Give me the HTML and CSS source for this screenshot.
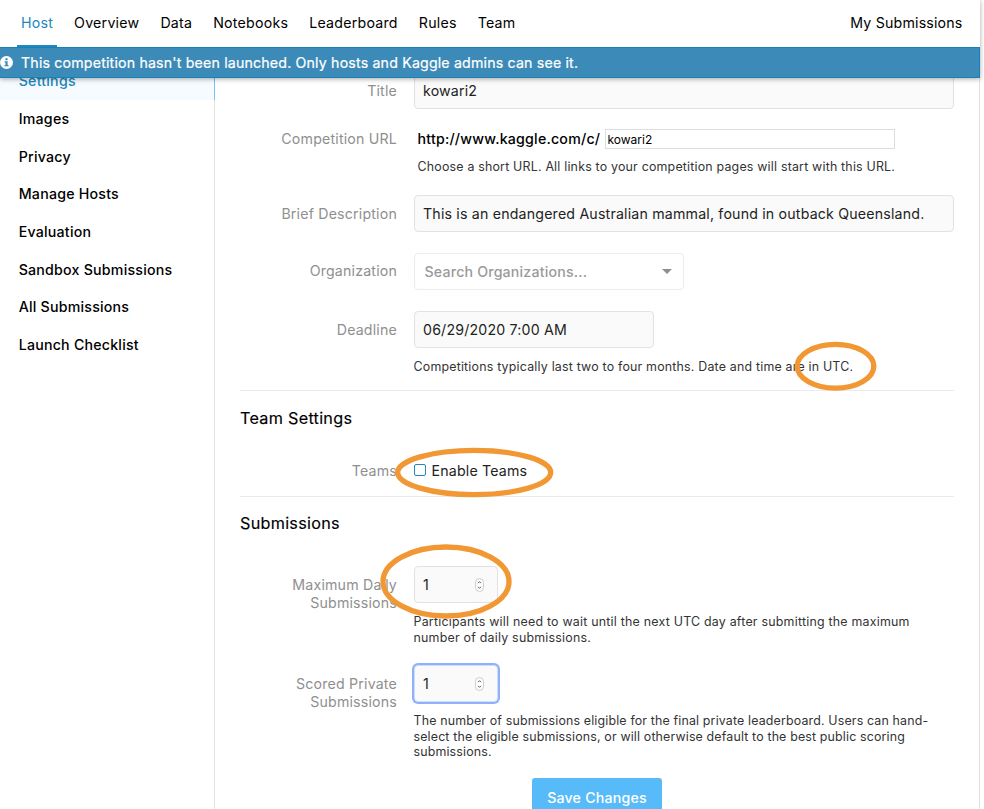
FILE: index.html
```
<!DOCTYPE html>
<html lang="en">
<head>
<meta charset="utf-8">
<title>Competition settings</title>
<link rel="stylesheet" href="styles.css">
</head>
<body>
<div class="page">
  <header class="header">
    <nav class="nav">
      <a class="nav-item active">Host</a>
      <a class="nav-item">Overview</a>
      <a class="nav-item">Data</a>
      <a class="nav-item">Notebooks</a>
      <a class="nav-item">Leaderboard</a>
      <a class="nav-item">Rules</a>
      <a class="nav-item">Team</a>
      <a class="nav-item nav-right">My Submissions</a>
    </nav>
    <div class="banner">
      <svg class="info" viewBox="0 0 13 13"><circle cx="6.5" cy="6.5" r="6.5" fill="#fff"/><path d="M5.4 2.3h2.2v1.9H5.4zM4.6 5.3h3v3.6h.9v1.3H4.5V8.900h1V6.600h-.9z" fill="#3c8ab8"/></svg>
      <span>This competition hasn't been launched. Only hosts and Kaggle admins can see it.</span>
    </div>
  </header>
  <div class="body">
    <aside class="sidebar">
      <a class="side-item current">Settings</a>
      <a class="side-item">Images</a>
      <a class="side-item">Privacy</a>
      <a class="side-item">Manage Hosts</a>
      <a class="side-item">Evaluation</a>
      <a class="side-item">Sandbox Submissions</a>
      <a class="side-item">All Submissions</a>
      <a class="side-item">Launch Checklist</a>
    </aside>
    <main class="form">
      <section class="group group-basic">
        <div class="row">
          <div class="label">Title</div>
          <div class="field"><div class="input">kowari2</div></div>
        </div>
        <div class="row row-url">
          <div class="label">Competition URL</div>
          <div class="field">
            <div class="url"><span class="url-prefix">http://www.kaggle.com/c/</span><div class="url-input">kowari2</div></div>
            <p class="help">Choose a short URL. All links to your competition pages will start with this URL.</p>
          </div>
        </div>
        <div class="row row-brief">
          <div class="label">Brief Description</div>
          <div class="field"><div class="input">This is an endangered Australian mammal, found in outback Queensland.</div></div>
        </div>
        <div class="row row-org">
          <div class="label">Organization</div>
          <div class="field"><div class="select"><span>Search Organizations...</span><i class="caret"></i></div></div>
        </div>
        <div class="row row-deadline">
          <div class="label">Deadline</div>
          <div class="field">
            <div class="input input-date">06/29/2020 7:00 AM</div>
            <p class="help">Competitions typically last two to four months. Date and time are in UTC.</p>
          </div>
        </div>
      </section>
      <section class="group group-team">
        <h2>Team Settings</h2>
        <div class="row row-teams">
          <div class="label">Teams</div>
          <div class="field check"><i class="box"></i><span>Enable Teams</span></div>
        </div>
      </section>
      <section class="group group-subs">
        <h2>Submissions</h2>
        <div class="row row-max">
          <div class="label">Maximum Daily Submissions</div>
          <div class="field">
            <div class="input input-num"><span>1</span><svg class="stepper" viewBox="0 0 9 14"><rect x=".5" y=".5" width="8" height="13" rx="4" fill="#fff" stroke="#ccc"/><path d="M3 5.200 4.500 3.700 6 5.200M3 8.800 4.500 10.300 6 8.800" fill="none" stroke="#444" stroke-width=".9"/></svg></div>
            <p class="help help-wide">Participants will need to wait until the next UTC day after submitting the maximum<br>number of daily submissions.</p>
          </div>
        </div>
        <div class="row row-scored">
          <div class="label">Scored Private Submissions</div>
          <div class="field">
            <div class="input input-num focused"><span>1</span><svg class="stepper" viewBox="0 0 9 14"><rect x=".5" y=".5" width="8" height="13" rx="4" fill="#fff" stroke="#ccc"/><path d="M3 5.200 4.500 3.700 6 5.200M3 8.800 4.500 10.300 6 8.800" fill="none" stroke="#444" stroke-width=".9"/></svg></div>
            <p class="help help-tight">The number of submissions eligible for the final private leaderboard. Users can hand-<br>select the eligible submissions, or will otherwise default to the best public scoring<br>submissions.</p>
          </div>
        </div>
        <button class="save">Save Changes</button>
      </section>
    </main>
  </div>
</div>
<svg class="marks" viewBox="0 0 984 809">
  <ellipse cx="835.5" cy="366.300" rx="38.300" ry="21.900"/>
  <ellipse cx="474.200" cy="472.500" rx="76.500" ry="22.100"/>
  <ellipse cx="446" cy="581.500" rx="63" ry="34.500"/>
</svg>
</body>
</html>
```
FILE: styles.css
```
* { box-sizing: border-box; }

html, body { height: 100%; }

body {
  margin: 0;
  background: #fff;
  color: #000;
  font: 14.2px/18px Inter, "Liberation Sans", sans-serif;
  letter-spacing: .21px;
  overflow: hidden;
}

.page {
  width: 980px;
  height: 809px;
  display: flex;
  flex-direction: column;
  border-right: 1px solid #e0e0e0;
}

.header {
  position: relative;
  z-index: 2;
  flex: none;
  width: 980px;
  height: 78px;
  background: #fff;
  box-shadow: 0 1px 5px rgba(0, 0, 0, .35);
}

.nav {
  display: flex;
  align-items: flex-start;
  gap: 21px;
  height: 47px;
  padding: 0 17.500px 0 21px;
}

.nav-item {
  height: 47px;
  line-height: 45.500px;
  letter-spacing: .23px;
}

.nav-item.active {
  position: relative;
  color: #2088bc;
}

.nav-item.active::after {
  content: "";
  position: absolute;
  left: -4px;
  right: -4px;
  bottom: 0;
  height: 2px;
  background: #2088bc;
}

.nav-right {
  margin-left: auto;
  letter-spacing: .18px;
}

.banner {
  display: flex;
  align-items: center;
  gap: 8px;
  height: 31px;
  border: 1px solid #1583b8;
  border-left: 0;
  background: #3c8ab8;
  color: #fff;
  letter-spacing: .17px;
  -webkit-text-stroke: .2px #fff;
}

.info {
  width: 13px;
  height: 13px;
}

.body {
  display: flex;
  flex: 1;
  min-height: 0;
  overflow: hidden;
}

.sidebar {
  width: 215px;
  flex: none;
  border-right: 1px solid #e2e2e2;
  font-weight: 500;
  letter-spacing: .22px;
}

.side-item {
  display: block;
  height: 37.700px;
  line-height: 37.400px;
  padding-left: 18.700px;
}

.side-item.current {
  margin-top: -15.700px;
  margin-right: -1px;
  border-right: 1px solid #7cc0f0;
  background: #f5fbff;
  color: #2088bc;
}

.form {
  width: 739px;
  padding-left: 25px;
}

.group { width: 714px; }

.group-basic { margin-top: -6px; }

.group + .group { border-top: 1px solid #ebebeb; }

.row {
  display: grid;
  grid-template-columns: 157px 540px;
  column-gap: 16.500px;
}

.label {
  padding-top: 10px;
  color: #8f8f8f;
  text-align: right;
  letter-spacing: .18px;
}

.input {
  display: flex;
  align-items: center;
  height: 37px;
  padding: 0 9px 0 8.500px;
  border: 1px solid #e2e2e2;
  border-radius: 4px;
  background: #fafafa;
  color: #222;
  letter-spacing: .18px;
}

.help {
  margin: 0;
  color: #333;
  font-size: 12.400px;
  line-height: 15.500px;
  letter-spacing: .2px;
  white-space: nowrap;
}

.help-wide { letter-spacing: .225px; }

.help-tight { letter-spacing: .16px; }

.row-url { margin-top: 20px; height: 66px; }
.row-url .label { padding-top: 1px; }
.row-url .help { padding: 10px 0 0 4px; }

.url {
  display: flex;
  align-items: center;
  height: 20px;
  padding-left: 4px;
}

.url-prefix {
  width: 187.500px;
  font-weight: 500;
}

.url-input {
  width: 290px;
  height: 20px;
  padding-left: 1.500px;
  border: 1px solid #ddd;
  font-size: 12px;
  line-height: 19px;
  letter-spacing: 0;
}

.row-org { margin-top: 21px; }
.row-org .label { padding-top: 9px; }

.select {
  display: flex;
  align-items: center;
  justify-content: space-between;
  width: 270px;
  height: 37px;
  padding: 0 11px 0 10px;
  border: 1px solid #ececec;
  border-radius: 4px;
  color: #9a9a9a;
  font-weight: 500;
  letter-spacing: .18px;
}

.caret {
  border: 5px solid transparent;
  border-top-color: #8f8f8f;
  border-bottom: 0;
}

.row-deadline { margin-top: 21px; height: 79px; }
.row-deadline .help { padding-top: 11px; }

.input-date { width: 240px; }

h2 {
  margin: 0;
  font-size: 16.200px;
  line-height: 20px;
  font-weight: 400;
  letter-spacing: .28px;
  -webkit-text-stroke: .15px #000;
}

.group-team { height: 106px; padding-top: 17px; }

.row-teams { margin-top: 34px; }
.row-teams .label { padding-top: 0; }

.check {
  display: flex;
  align-items: center;
  gap: 6px;
  height: 18px;
  color: #222;
  letter-spacing: .18px;
}

.box {
  width: 12px;
  height: 12px;
  margin-top: -2px;
  border: 1.500px solid #2088bc;
  border-radius: 2px;
}

.group-subs { padding-top: 16px; }

.row-max { margin-top: 33px; }
.row-max .label { padding-top: 10px; }
.row-max .help { padding-top: 11px; }

.input-num {
  justify-content: space-between;
  width: 84px;
  padding-right: 13px;
}

.stepper {
  width: 9px;
  height: 14px;
}

.row-scored { margin-top: 20px; }
.row-scored .label { padding-top: 10px; }
.row-scored .help { padding-top: 11px; }

.focused {
  border-color: #d0dcf8;
  box-shadow: 0 0 0 2px #8fb0fb;
}

.save {
  display: block;
  width: 130px;
  height: 40px;
  margin: 18.500px 0 0 292px;
  border: 0;
  border-radius: 3px;
  background: #58bbf9;
  color: #fff;
  font: inherit;
  font-weight: 500;
  letter-spacing: .2px;
}

/* Highlight rings lie over the form */
.marks {
  position: absolute;
  top: 0;
  left: 0;
  z-index: 3;
  width: 984px;
  height: 809px;
  fill: none;
  stroke: #f19834;
  stroke-width: 5.300;
  pointer-events: none;
}
```
